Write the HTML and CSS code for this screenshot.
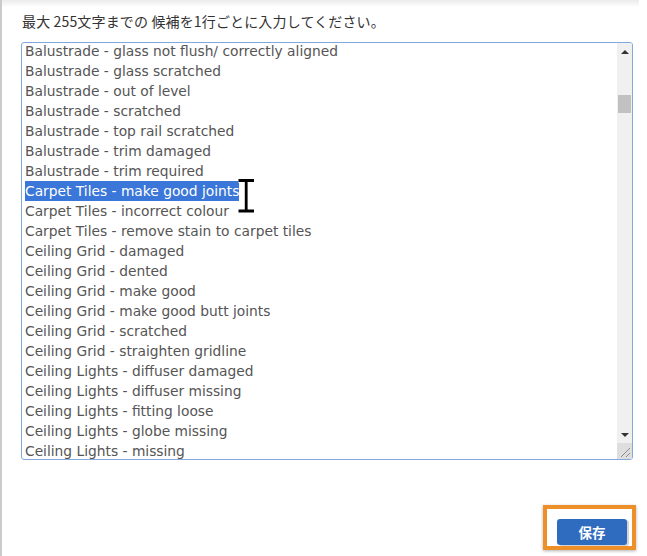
FILE: index.html
```html
<!DOCTYPE html>
<html lang="ja">
<head>
    <meta charset="UTF-8">
    <meta name="viewport" content="width=device-width, initial-scale=1.0">
    <title>候補の編集</title>
    <link rel="stylesheet" href="styles.css">
</head>
<body>
    <div class="shade"></div>
    <div class="panel">
        <p class="hint">最大 255文字までの 候補を1行ごとに入力してください。</p>

        <div class="editor">
            <div class="lines">
                <div class="line">Balustrade - glass not flush/ correctly aligned</div>
                <div class="line">Balustrade - glass scratched</div>
                <div class="line">Balustrade - out of level</div>
                <div class="line">Balustrade - scratched</div>
                <div class="line">Balustrade - top rail scratched</div>
                <div class="line">Balustrade - trim damaged</div>
                <div class="line">Balustrade - trim required</div>
                <div class="line"><span class="sel">Carpet Tiles - make good joints</span></div>
                <div class="line">Carpet Tiles - incorrect colour</div>
                <div class="line">Carpet Tiles - remove stain to carpet tiles</div>
                <div class="line">Ceiling Grid - damaged</div>
                <div class="line">Ceiling Grid - dented</div>
                <div class="line">Ceiling Grid - make good</div>
                <div class="line">Ceiling Grid - make good butt joints</div>
                <div class="line">Ceiling Grid - scratched</div>
                <div class="line">Ceiling Grid - straighten gridline</div>
                <div class="line">Ceiling Lights - diffuser damaged</div>
                <div class="line">Ceiling Lights - diffuser missing</div>
                <div class="line">Ceiling Lights - fitting loose</div>
                <div class="line">Ceiling Lights - globe missing</div>
                <div class="line">Ceiling Lights - missing</div>
            </div>

            <div class="scrollbar">
                <div class="sb-btn"><span class="arrow-up"></span></div>
                <div class="sb-track">
                    <div class="sb-thumb"></div>
                </div>
                <div class="sb-btn"><span class="arrow-down"></span></div>
                <div class="sb-grip">
                    <svg width="15" height="16" viewBox="0 0 15 16">
                        <path d="M13 5 L4 14 M13 10 L9 14" stroke="#8a8a8a" stroke-width="1" fill="none"/>
                    </svg>
                </div>
            </div>

            <!-- text cursor over the selected line -->
            <svg class="ibeam" width="20" height="36" viewBox="0 0 20 36">
                <path d="M1.5 2.5 H17 M9.2 2.5 V33 M1.5 33 H17" stroke="#fff" stroke-width="5" fill="none"/>
                <path d="M1.5 2.5 H17 M9.2 2.5 V33 M1.5 33 H17" stroke="#000" stroke-width="2.8" fill="none"/>
            </svg>
        </div>

        <div class="actions">
            <div class="focus-ring">
                <button type="button" class="save">保存</button>
            </div>
        </div>
    </div>
</body>
</html>
```

FILE: styles.css
```css
body {
    margin: 0;
    padding: 0;
    background-color: #fff;
    border-left: 2px solid #cbcbcb;
    min-height: 556px;
    box-sizing: border-box;
    font-family: "DejaVu Sans", "Noto Sans CJK JP", sans-serif;
}

.shade {
    height: 7px;
    margin-right: 8px;
    background: linear-gradient(#ebebeb, #fff);
}

.panel {
    padding: 0 11px 0 19px;
}

.hint {
    margin: 4px 0 11px 1px;
    font-family: "Noto Sans CJK JP", sans-serif;
    font-size: 14px;
    letter-spacing: 0.15px;
    line-height: 20px;
    color: #333;
}

.editor {
    position: relative;
    display: flex;
    width: 612px;
    height: 418px;
    box-sizing: border-box;
    border: 1px solid #82a9de;
    border-radius: 3px;
    overflow: hidden;
}

.lines {
    flex: 1;
    overflow: hidden;
    padding-left: 3px;
}

.line {
    font-size: 13.8px;
    line-height: 20px;
    color: #555;
    white-space: nowrap;
}

.line:first-child {
    margin-top: -2px;
}

.sel {
    display: inline-block;
    background-color: #3a77d8;
    color: #fff;
}

.scrollbar {
    width: 15px;
    display: flex;
    flex-direction: column;
    background-color: #f0f0f0;
}

.sb-btn {
    height: 17px;
    display: flex;
    align-items: center;
    justify-content: center;
}

.arrow-up {
    width: 0;
    height: 0;
    border-left: 4px solid transparent;
    border-right: 4px solid transparent;
    border-bottom: 4px solid #333;
}

.arrow-down {
    width: 0;
    height: 0;
    border-left: 4px solid transparent;
    border-right: 4px solid transparent;
    border-top: 4px solid #333;
}

.sb-track {
    flex: 1;
    padding: 35px 1px 0 1px;
}

.sb-thumb {
    height: 18px;
    background-color: #c1c1c1;
}

.sb-grip {
    height: 16px;
    background-color: #dedede;
}

.sb-grip svg {
    display: block;
}

.ibeam {
    position: absolute;
    left: 215px;
    top: 135px;
}

.actions {
    display: flex;
    justify-content: flex-end;
    margin-top: 45px;
}

.focus-ring {
    border: 4px solid #ee9029;
    padding: 10px 5px 1px 10px;
    box-shadow: 0 1px 3px rgba(0, 0, 0, 0.3);
}

.save {
    display: block;
    width: 70px;
    height: 26px;
    border: none;
    border-radius: 3px;
    background-color: #2f6cbf;
    color: #fff;
    font-family: "Noto Sans CJK JP", sans-serif;
    font-weight: bold;
    font-size: 13.5px;
    box-shadow: 2px 1px 0 #d4d4d4;
    cursor: pointer;
}
```
